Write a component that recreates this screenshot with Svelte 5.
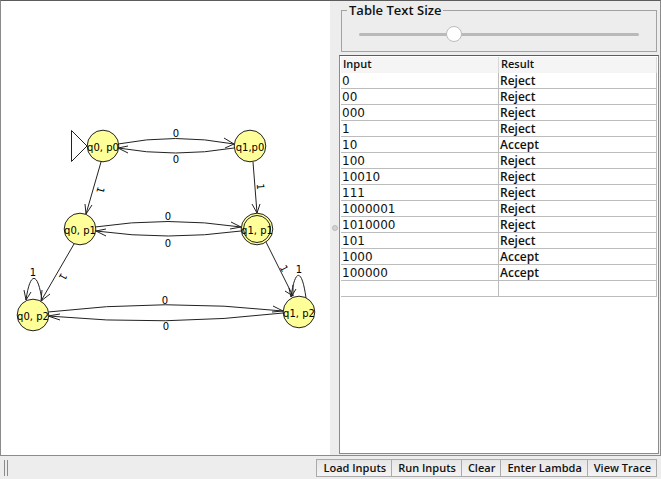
<script>
  let size = $state(33);
  const rows = [
    ['0', 'Reject'], ['00', 'Reject'], ['000', 'Reject'], ['1', 'Reject'],
    ['10', 'Accept'], ['100', 'Reject'], ['10010', 'Reject'], ['111', 'Reject'],
    ['1000001', 'Reject'], ['1010000', 'Reject'], ['101', 'Reject'],
    ['1000', 'Accept'], ['100000', 'Accept'], ['', '']
  ];
  const states = [
    { x: 103, y: 146, label: 'q0, p0' },
    { x: 250, y: 146, label: 'q1,p0' },
    { x: 80, y: 229, label: 'q0, p1' },
    { x: 257, y: 229, label: 'q1, p1', final: true },
    { x: 33, y: 315, label: 'q0, p2' },
    { x: 299, y: 312, label: 'q1, p2' }
  ];
  const edges = [
    'M118 144Q175 133 234 144M224 138L234 144L225 148',
    'M234 148Q175 158 118 148M128 146L118 148L128 153',
    'M95 227Q168 216 241 227M231 222L241 227L230 229',
    'M241 231Q168 241 96 231M106 229L96 231L106 236',
    'M48 312Q165 298 283 311M273 306L283 311L272 312',
    'M283 313Q165 327 48 316M60 314L48 316L60 320',
    'M101 162L86 214M85 204L86 214L92 205',
    'M253 162L257 213M252 204L257 213L260 204',
    'M74 244L41 301M42 290L41 301L50 294',
    'M266 242L293 296M285 291L293 296L293 285',
    'M42 301C38 271 30 271 26 300M24 290L26 300L31 292',
    'M306 298C302 268 295 268 291 297M289 288L291 297L296 289'
  ];
  const labels = [
    [176, 137, '0'], [176, 163, '0'], [168, 220, '0'], [168, 247, '0'],
    [165, 304, '0'], [166, 330, '0'], [33, 276, '1'], [299, 273, '1'],
    [97, 189, '1', 106], [257, 187, '1', 86], [60, 275, '1', 120], [281, 270, '1', 63]
  ];
  const actions = ['Load Inputs', 'Run Inputs', 'Clear', 'Enter Lambda', 'View Trace'];
</script>

<div class="window">
  <main>
    <svg class="canvas" role="img" aria-label="Automaton">
      <g class="drawing">
        <path class="start" d="M71.5 130.5V161.5L87 146Z" />
        {#each edges as d}<path class="edge" {d} />{/each}
        {#each states as s}
          <circle cx={s.x} cy={s.y} r="15.8" />
          {#if s.final}<circle cx={s.x} cy={s.y} r="13.5" />{/if}
          <text x={s.x} y={s.y + 5}>{s.label}</text>
        {/each}
        {#each labels as [x, y, t, turn]}
          {#if turn}
            <text transform="translate({x} {y}) rotate({turn})">{t}</text>
          {:else}
            <text {x} {y}>{t}</text>
          {/if}
        {/each}
      </g>
    </svg>
    <div class="divider"><span class="grip"></span></div>
    <section>
      <fieldset>
        <legend><label for="size">Table Text Size</label></legend>
        <input id="size" type="range" min="0" max="100" bind:value={size} />
      </fieldset>
      <div class="tablebox">
        <table>
          <thead><tr><th>Input</th><th>Result</th></tr></thead>
          <tbody>
            {#each rows as [input, result]}
              <tr><td>{input}</td><td>{result}</td></tr>
            {/each}
          </tbody>
        </table>
      </div>
    </section>
  </main>
  <footer>
    <span class="handle"></span>
    <div class="actions">
      {#each actions as a}<button type="button">{a}</button>{/each}
    </div>
  </footer>
</div>

<style>
  .window {
    box-sizing: border-box;
    height: 100vh;
    display: flex;
    flex-direction: column;
    background: #ededed;
    color: #111;
    font: 600 12px/16px "Open Sans", "Noto Sans", sans-serif;
  }
  main {
    flex: 1;
    min-height: 0;
    display: flex;
    box-sizing: border-box;
    border: 1px solid #8b8b8b;
    border-top-color: #5c5c5c;
  }
  .canvas {
    flex: 1;
    min-width: 0;
    height: 100%;
    background: #fff;
    overflow: hidden;
  }
  .drawing { transform: translate(-1px, -1px); }
  circle { fill: #ffff99; stroke: #222; stroke-width: 1; }
  .edge, .start { fill: none; stroke: #222; stroke-width: 1; }
  text { font: 10px "DejaVu Sans", sans-serif; text-anchor: middle; fill: #000; }
  .divider {
    flex: 0 0 9px;
    display: flex;
    align-items: center;
    justify-content: center;
  }
  .grip {
    box-sizing: border-box;
    width: 6px;
    height: 6px;
    border: 1px solid #bbb;
    border-radius: 50%;
    background: #d2d2d2;
  }
  section {
    flex: 0 0 321px;
    min-width: 0;
    box-sizing: border-box;
    padding: 1px 1px 1px 0;
    display: flex;
    flex-direction: column;
  }
  fieldset {
    box-sizing: border-box;
    min-width: 0;
    height: 50px;
    margin: 0 2px 3px 2px;
    padding: 7px 17px 0;
    border: 1px solid #a2a2a2;
  }
  legend {
    margin-left: -12px;
    padding: 0 2px;
    font-size: 13px;
  }
  input {
    display: block;
    width: 100%;
    height: 18px;
    margin: 0;
    appearance: none;
    background: transparent;
  }
  input::-webkit-slider-runnable-track {
    height: 3px;
    border-radius: 2px;
    background: #b9b9b9;
  }
  input::-webkit-slider-thumb {
    appearance: none;
    box-sizing: border-box;
    width: 16px;
    height: 16px;
    margin-top: -7px;
    border: 1px solid #bcbcbc;
    border-radius: 50%;
    background: #fff;
  }
  .tablebox {
    flex: 1;
    min-height: 0;
    overflow: hidden;
    padding: 1px 1px 0 1px;
    border: 1px solid #8b8b8b;
    border-top-color: #5c5c5c;
    background: #fff;
  }
  table {
    width: 100%;
    table-layout: fixed;
    border-collapse: separate;
    border-spacing: 0;
  }
  th, td {
    height: 16px;
    box-sizing: border-box;
    padding: 0 1px;
    text-align: left;
    border-right: 1px solid #bcbcbc;
  }
  th {
    padding: 0 2px 2px;
    background: #f5f5f5;
    border-color: #d8d8d8;
    font-size: 11px;
    font-weight: 600;
    line-height: 14px;
  }
  td { padding-top: 1px; line-height: 14px; border-bottom: 1px solid #bcbcbc; }
  td:first-child { font: 12px/14px "DejaVu Sans", sans-serif; }
  footer {
    flex: 0 0 23px;
    display: flex;
    align-items: center;
    justify-content: space-between;
    padding: 0 4px;
  }
  .handle {
    box-sizing: border-box;
    width: 4px;
    height: 16px;
    border: solid #8b8b8b;
    border-width: 0 1px;
  }
  .actions { display: flex; }
  button {
    box-sizing: border-box;
    height: 18px;
    margin-left: -1px;
    padding: 0 5px 0 6px;
    border: 1px solid #aaa;
    border-radius: 0;
    background: linear-gradient(#e6e6e6, #f4f4f4);
    color: #111;
    font: inherit;
    font-size: 11px;
    white-space: nowrap;
  }
</style>
